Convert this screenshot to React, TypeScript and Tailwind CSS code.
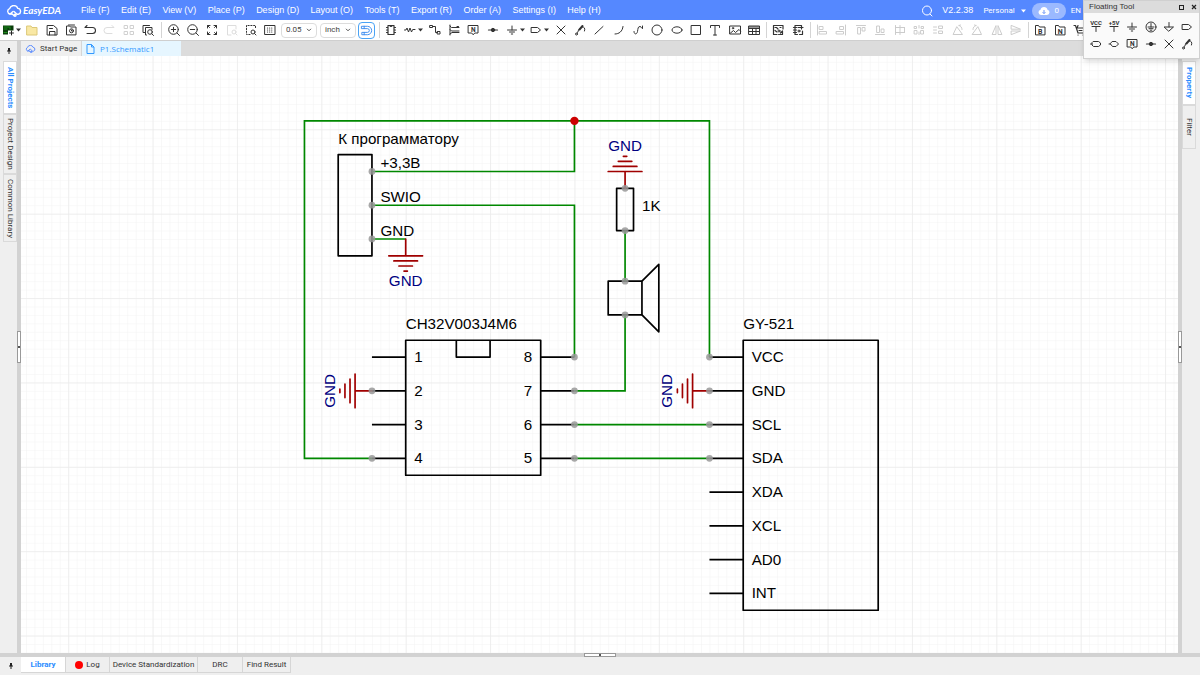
import React from 'react';

type IconProps = { children: React.ReactNode; className?: string };

const Icon = ({ children, className = 'size-4' }: IconProps) => (
  <svg
    viewBox="0 0 16 16"
    className={`${className} shrink-0`}
    fill="none"
    stroke="currentColor"
    strokeWidth="1"
    strokeLinecap="round"
    strokeLinejoin="round"
    aria-hidden="true"
  >
    {children}
  </svg>
);

const Caret = () => (
  <svg viewBox="0 0 5 4" className="w-[5px] h-1 shrink-0" fill="currentColor" aria-hidden="true">
    <path d="M0 .6h5L2.5 3.4z" />
  </svg>
);

const CloudLogo = ({ className }: { className: string }) => (
  <svg
    viewBox="0 0 16 12"
    className={`${className} shrink-0`}
    fill="none"
    stroke="currentColor"
    strokeWidth="1.4"
    strokeLinecap="round"
    strokeLinejoin="round"
    aria-hidden="true"
  >
    <path d="M6 9H4A2.800 2.800 0 0 1 3.600 3.600 4.400 4.400 0 0 1 11.900 3.400 3 3 0 0 1 12.600 9.200H11L8 6.500" />
    <path d="M4 9 7 6.500M6 9 8 10.500" />
    <circle cx="9" cy="10.300" r="1" />
  </svg>
);

const smallText = (x: number, y: number, size: number, text: string) => (
  <text x={x} y={y} fontSize={size} fontWeight="bold" fill="currentColor" stroke="none" textAnchor="middle">
    {text}
  </text>
);

const icons: Record<string, React.ReactNode> = {
  New: (
    <>
      <rect x="3" y="3.5" width="10.5" height="9" fill="#0b3d0b" stroke="none" />
      <path d="M4 5h5M4 7h3M4 10.5h3M10 5v2" stroke="#1d8f1d" />
      <path d="M8 8.500h6V13H8z" fill="#fff" stroke="none" />
      <path d="M11.500 9v4M9.500 11h4" stroke="#222" />
    </>
  ),
  Open: <path d="M3 4h4l1 1.500h5v7.500H3z" fill="#f9e8a4" stroke="#dcc878" />,
  Save: <path d="M3.500 3.500h6l3.500 3v6.500h-9.500zM5.500 13V9.500h5.500V13M5.500 6.500h3" />,
  Preview: (
    <>
      <path d="M3.500 12.500V4h3l1 1H13v7.500z M5.500 3h6" />
      <circle cx="8.500" cy="8.800" r="2" />
      <path d="M8.500 8v1h1" />
    </>
  ),
  Undo: <path d="M5 3.500 3 5.500h7.500a3 3 0 0 1 0 6H5" strokeWidth="1.100" />,
  Redo: <path d="M11 3.500 13 5.500H6a3 3 0 0 0 0 6h5" stroke="#dddddd" />,
  Tiles: (
    <path d="M3.500 3.500H6.500V6.500H3.500zM9.500 3.500h3v3h-3zM3.500 9.500h3v3h-3zM9.500 9.500h3v3h-3z" stroke="#d0d0d0" />
  ),
  Find: (
    <>
      <path d="M5 10.500H3v-7h6.500M6.500 13H5.500V5.500H12V7.500" />
      <circle cx="10" cy="10" r="2.300" />
      <path d="m11.800 11.800 1.700 1.700" />
    </>
  ),
  'Zoom in': (
    <>
      <circle cx="7.500" cy="7.500" r="4.800" />
      <path d="m11 11 2.500 2.500M5.300 7.500h4.400M7.500 5.300v4.400" />
    </>
  ),
  'Zoom out': (
    <>
      <circle cx="7.500" cy="7.500" r="4.800" />
      <path d="m11 11 2.500 2.500M5.300 7.500h4.400" />
    </>
  ),
  Fit: <path d="M3.500 6V3.500H6M10 3.500h2.500V6M12.500 10v2.500H10M6 12.500H3.500V10M3.500 3.500l2 2M12.500 3.500l-2 2M12.500 12.500l-2-2M3.500 12.500l2-2" />,
  'Zoom selection': (
    <g stroke="#dddddd">
      <path d="M7 13H3.500V3.500H12V7" />
      <circle cx="10" cy="10" r="2" />
      <path d="m11.500 11.500 1.500 1.500" />
    </g>
  ),
  'Zoom area': (
    <>
      <path d="M7 12.500H3.500v-9h9V7" strokeDasharray="1.200 1.600" />
      <circle cx="10" cy="10" r="2" />
      <path d="m11.500 11.500 1.500 1.500" />
    </>
  ),
  'Grid type': (
    <>
      <rect x="3" y="3.500" width="10" height="9" />
      <path d="M5.500 6h5.500M5.500 8h5.500M5.500 10h5.500" strokeDasharray=".1 2" strokeWidth="1.200" />
    </>
  ),
  Snap: <path d="M3 3.500H9a4.500 4.500 0 0 1 0 9H3V10H9a2 2 0 0 0 0-4H3zM5.500 3.500V6M5.500 10v2.500" />,
  Component: (
    <path d="M5 3.500h6v9H5zM7 3.500a1 1 0 0 0 2 0M3.500 5.500H5M3.500 8H5M3.500 10.500H5M11 5.500h1.500M11 8h1.500M11 10.500h1.500" strokeWidth="1.200" />
  ),
  Resistor: <path d="M2.500 8H4l1-2 1.500 4L8 6l1.500 4 1.200-2.500H13" />,
  Wire: <path d="M3 3.500h2.500v2H3zM5.500 4.500H8.500v6H10.500M10.500 9.500H13v2.500h-2.500z" />,
  Bus: <path d="M4 3v10M4 4l1.500 1.500H13M4 7.500 5.500 9H13M11 4.500h1.500M4 12l2-1.500h7" />,
  'Net label': (
    <>
      <path d="M3.500 3.500h9.500V11H9.700L8.200 12.800 6.700 11H3.500z" />
      {smallText(8.2, 9.7, 6.5, 'N')}
    </>
  ),
  Junction: (
    <>
      <path d="M3.500 8h9" strokeWidth="1.200" />
      <circle cx="8" cy="8" r="1.700" fill="currentColor" />
    </>
  ),
  Ground: <path d="M8 4v4M3.500 8h9M5.500 10h5M7.300 12h1.400" />,
  Port: <path d="M3.500 5.500h6L12.500 8l-3 2.500h-6z" />,
  'No connect': <path d="m4 4 8 8M12 4l-8 8" />,
  Probe: (
    <>
      <circle cx="4.500" cy="12" r="1" />
      <path d="M5 11c2-1 .500-3 2.500-4.500M12.500 9c1-3-.500-4-2-4" />
      <path d="M7.500 7.500 10.500 4" strokeWidth="2" />
    </>
  ),
  Line: <path d="m4 12 8-7.500" />,
  Arc: <path d="M4 12c4 0 7.500-2.500 8-7.500" />,
  Bezier: <path d="M4 9.500c0 3.500 3 3 3.500 0S8 4.500 10 4.500c1.700 0 1.300 2.500 2.500 2M12.500 4v2" />,
  Circle: <circle cx="8" cy="8" r="5" />,
  Ellipse: <ellipse cx="8" cy="8" rx="5" ry="3.200" />,
  Rectangle: <rect x="3.500" y="3.500" width="9" height="9" />,
  Text: <path d="M3.500 5.500v-2h9v2M8 3.500v9.500M6.500 13h3" />,
  Image: (
    <>
      <rect x="3" y="4" width="10.500" height="8" />
      <path d="m3.500 11 3-2.500 2 2 3.500-3 1.500 1.500" />
      <circle cx="6" cy="6.200" r=".7" />
    </>
  ),
  Table: <path d="M3 4h10.500v8.500H3zM3 6.500h10.500M3 9.500h10.500M6.500 6.500v6M10 6.500v6M3 5h10.500" />,
  'To PCB': (
    <>
      <path d="M13 7V3.500H3.500v9H7M5 5.500h1.500L8 7M5 8.500 7 10M10 5.500h1" strokeWidth="1.200" />
      <circle cx="9" cy="9" r="1" />
      <path d="M12.500 9v3.500H9.500M8.500 12.500v0M12.500 9l-2 2" strokeWidth="1.200" />
    </>
  ),
  'Update PCB': (
    <>
      <path d="M5 3.500h6.500v3.500M5 3.500v9h2.500M3.500 5.500h3M3.500 8h3M3.500 10.500h3M8 5.500h5" strokeWidth="1.200" />
      <circle cx="9" cy="9" r="1" />
      <path d="M12.500 9v3.500H9.500" strokeWidth="1.200" />
    </>
  ),
  'Align left': <path d="M3.500 3v10M5.500 4.500H9v3H5.500zM5.500 9.500h7v2.500h-7z" />,
  'Align right': <path d="M12.500 3v10M7 4.500h3.500v3H7zM3.500 9.500h7v2.500h-7z" />,
  'Align top': <path d="M3.500 3.500h9M5 5.500h2.500V12H5zM9.500 5.500H12V9H9.500z" />,
  'Align bottom': <path d="M3.500 12.500h9M5 4h2.500v6.500H5zM9.500 7H12v3.500H9.500z" />,
  'Align grid': <path d="M3.500 3.500v9M8 3.500v9M12.500 5.500h-9M12.500 10.500h-9M12.500 5.500v5" />,
  'Distribute horizontally': <path d="M8 3.500v2.500M8 10v2.500M3.500 4.500h2v2h-2zM10.500 4.500h2v2h-2zM3.500 8.500H6v3.500H3.500zM10 8.500h2.500v3.500H10z" />,
  'Distribute vertically': <path d="M3.500 5h3M3.500 8h3M3.500 11h3M9 4h3.500v2.500H9zM9 9h3.500v2.500H9z" />,
  'Rotate left': <path d="M3.500 12.500h9L7 5zM9 3.500c2 .5 3 2 3 4M9 3.500 10.500 3" />,
  'Rotate right': <path d="M3.500 12.500h9L9 5zM7 3.500c-2 .5-3 2-3 4M7 3.500 5.500 3" />,
  'Flip horizontal': <path d="M7 4v8.500H3.500zM9 4v8.500h3.500z" />,
  'Flip vertical': <path d="M3.500 7.200 12.500 7.200 3.500 3.500zM3.500 9h9L3.500 12.500z" />,
  'Export BOM': (
    <>
      <path d="M3.500 12.500v-9h3l1 1.500H13v7.500z" />
      {smallText(8.2, 11.6, 7, 'B')}
    </>
  ),
  'Export netlist': (
    <>
      <path d="M3.500 12.500v-9h3l1 1.500H13v7.500z" />
      {smallText(8.2, 11.6, 7, 'N')}
    </>
  ),
  Cart: <path d="M3 3.500h1.500l2.500 7.500h6M5.500 6h7.500M7 13h.1M12 13h.1M8 8.500h3M7 3.500 6 6" strokeWidth="1.200" />,
  VCC: (
    <>
      {smallText(8, 6, 6, 'VCC')}
      <path d="M4 7.500h8M8 7.500v5" />
    </>
  ),
  '+5V': (
    <>
      {smallText(8, 6, 6, '+5V')}
      <path d="M4 7.500h8M8 7.500v5" />
    </>
  ),
  'Protective ground': (
    <>
      <circle cx="8" cy="8" r="5" />
      <path d="M8 4.500v3.500M5 8h6M6 9.700h4M7.200 11.200h1.600" />
    </>
  ),
  'Analog ground': <path d="M8 3.500V8M3.500 8h9L8 12z" />,
  'Input port': <path d="M5.500 5.500h5l2 1.500v2l-2 1.500h-5l-1.500-1.500V7zM2.500 8H4" />,
  'Bidirectional port': <path d="M6.500 5.500h3.500L12.500 8 10 10.500H6.500L4.500 8zM3 8h1.500" />,
};

type Tool = { name: string; menu?: boolean };

const list = (...names: string[]): Tool[] =>
  names.map((n) => (n.endsWith('*') ? { name: n.slice(0, -1), menu: true } : { name: n }));

const fileTools = list('New*', 'Open', 'Save', 'Preview', 'Undo', 'Redo', 'Tiles', 'Find');
const viewTools = list('Zoom in', 'Zoom out', 'Fit', 'Zoom selection', 'Zoom area', 'Grid type');
const drawTools = list(
  'Component', 'Resistor*', 'Wire', 'Bus', 'Net label', 'Junction', 'Ground*', 'Port*', 'No connect', 'Probe',
  'Line', 'Arc', 'Bezier', 'Circle', 'Ellipse', 'Rectangle', 'Text', 'Image', 'Table'
);
const pcbTools = list('To PCB', 'Update PCB');
const alignTools = list(
  'Align left', 'Align right', 'Align top', 'Align bottom', 'Align grid', 'Distribute horizontally',
  'Distribute vertically', 'Rotate left', 'Rotate right', 'Flip horizontal', 'Flip vertical'
);
const exportTools = list('Export BOM', 'Export netlist', 'Cart');
const floatingTools = list(
  'VCC', '+5V', 'Ground', 'Protective ground', 'Analog ground', 'Port',
  'Input port', 'Bidirectional port', 'Net label', 'Junction', 'No connect', 'Probe'
);

const ToolGroup = ({ tools, className }: { tools: Tool[]; className: string }) => (
  <div className={`flex shrink-0 items-center justify-between ${className}`}>
    {tools.map((t) => (
      <button key={t.name} type="button" aria-label={t.name} className="flex shrink-0 items-center">
        <Icon>{icons[t.name]}</Icon>
        {t.menu && <Caret />}
      </button>
    ))}
  </div>
);

const Separator = () => <div className="h-4 w-px shrink-0 bg-[#d4d4d4]" />;

const Select = ({ label, value, className }: { label: string; value: string; className: string }) => (
  <div className={`relative flex h-[15px] shrink-0 items-center rounded-sm border border-[#dcdcdc] ${className}`}>
    <select aria-label={label} className="w-full appearance-none bg-transparent pl-1 text-[8px] leading-3 text-[#444]">
      <option>{value}</option>
    </select>
    <svg viewBox="0 0 6 4" className="pointer-events-none absolute right-1 h-1 w-1.5" fill="none" stroke="#555" aria-hidden="true">
      <path d="m1 .8 2 2 2-2" />
    </svg>
  </div>
);

const menu = [
  'File (F)', 'Edit (E)', 'View (V)', 'Place (P)', 'Design (D)', 'Layout (O)',
  'Tools (T)', 'Export (R)', 'Order (A)', 'Settings (I)', 'Help (H)',
];

const Header = () => (
  <header className="flex h-5 shrink-0 items-center bg-[#5588ff] pt-px pl-1.5 text-[9px] text-white">
    <a href="#" className="flex w-[75px] shrink-0 items-center gap-px">
      <CloudLogo className="h-3 w-4" />
      <span className="font-[Lato,sans-serif] text-[10px] font-bold italic">EasyEDA</span>
    </a>
    <nav className="flex w-[520px] shrink-0 justify-between font-['Liberation_Sans',Arial,sans-serif]">
      {menu.map((m) => (
        <a key={m} href="#" className="whitespace-nowrap">
          {m}
        </a>
      ))}
    </nav>
    <div className="ml-auto flex shrink-0 items-center pr-[119px]">
      <button type="button" aria-label="Search" className="mr-[7px]">
        <Icon>
          <circle cx="8" cy="7.500" r="4.500" />
          <path d="m11 11 2 2" />
        </Icon>
      </button>
      <span className="font-['Liberation_Sans',Arial,sans-serif]">V2.2.38</span>
      <button type="button" className="ml-2.5 flex items-center gap-1.5 text-[8px]">
        Personal <Caret />
      </button>
      <button type="button" className="mr-[5px] ml-1.5 flex h-4 w-[34px] items-center justify-center gap-1 rounded-full bg-[#9bb9ff] text-[8px]">
        <svg viewBox="0 0 12 10" className="h-2.5 w-3" aria-hidden="true">
          <path d="M3 9A2.700 2.700 0 0 1 2.500 3.700 3.600 3.600 0 0 1 9.500 3.700 2.700 2.700 0 0 1 9 9z" fill="#fff" />
          <path d="M6 4v3.500M4.600 6.200 6 7.600l1.400-1.400" fill="none" stroke="#6f97f5" />
        </svg>
        0
      </button>
      <span className="text-[8px]">EN</span>
    </div>
  </header>
);

const Toolbar = () => (
  <div className="flex h-[21px] shrink-0 items-center overflow-hidden border-b border-[#cfcfcf] bg-white text-[#333]">
    <ToolGroup tools={fileTools} className="w-[156px]" />
    <div className="flex w-2.5 shrink-0 justify-center">
      <Separator />
    </div>
    <ToolGroup tools={viewTools} className="w-28" />
    <Select label="Grid size" value="0.05" className="ml-[3px] w-9" />
    <Select label="Unit" value="inch" className="ml-[3px] w-9" />
    <button
      type="button"
      aria-label="Snap"
      className="ml-[2px] flex size-[17px] shrink-0 items-center justify-center rounded-sm border border-[#4aa3f5] text-[#3b8cf0]"
    >
      <Icon className="size-[15px]">{icons.Snap}</Icon>
    </button>
    <div className="flex w-2 shrink-0 justify-center">
      <Separator />
    </div>
    <ToolGroup tools={drawTools} className="w-[379px]" />
    <div className="flex w-2 shrink-0 justify-center">
      <Separator />
    </div>
    <ToolGroup tools={pcbTools} className="w-9" />
    <div className="flex w-2 shrink-0 justify-center">
      <Separator />
    </div>
    <ToolGroup tools={alignTools} className="w-[210px] text-[#cccccc]" />
    <div className="flex w-2 shrink-0 justify-center">
      <Separator />
    </div>
    <ToolGroup tools={exportTools} className="w-[55px]" />
  </div>
);

const FloatingTool = () => (
  <section className="absolute top-0 right-0 w-[117px] border border-[#d0d0d0] bg-[#fafafa] text-[#333] shadow-md">
    <div className="flex h-3 items-center bg-[#dcdcdc] pr-0.5 pl-[5px]">
      <h2 className="flex-1 font-['Liberation_Sans',Arial,sans-serif] text-[8px] leading-3">Floating Tool</h2>
      <button type="button" aria-label="Collapse" className="mr-[7px] size-[5px] border border-[#222]" />
      <button type="button" aria-label="Close">
        <svg viewBox="0 0 6 6" className="size-1.5" stroke="#222" strokeWidth="1.200" aria-hidden="true">
          <path d="m1 1 4 4M5 1 1 5" />
        </svg>
      </button>
    </div>
    <div className="grid grid-cols-6 gap-y-px px-[3px] pt-1.5 pb-1.5">
      {floatingTools.map((t) => (
        <button key={t.name} type="button" aria-label={t.name} className="flex justify-center">
          <Icon>{icons[t.name]}</Icon>
        </button>
      ))}
    </div>
  </section>
);

const Pin = () => (
  <svg viewBox="0 0 4 6" className="h-1.5 w-1" fill="#222" aria-hidden="true">
    <path d="M1 0h2v2.500h1v1H2.500V6h-1V3.500H0v-1h1z" />
  </svg>
);

const sideTab = 'flex w-3.5 items-center justify-center border border-[#dadada] text-[8px] [writing-mode:vertical-rl]';
const splitter = 'bg-[#d2d2d2] bg-[radial-gradient(#bdbdbd_40%,transparent_50%)] bg-[length:2px_2px]';

const Handle = ({ vertical }: { vertical?: boolean }) => (
  <div
    className={`flex items-center justify-center border border-[#999] bg-white ${vertical ? 'h-8 w-1' : 'h-1 w-8'}`}
  >
    <div className="size-0.5 bg-[#555]" />
  </div>
);

// wires in schematic units, ten units to a grid step
const wires = [
  'M360 390H280V-10H760V270',
  'M600-10V50H360',
  'M360 90H600V270',
  'M360 130H400',
  'M660 120V180',
  'M660 220V310H600',
  'M600 350H760',
  'M600 390H760',
];

const dots = [
  [360, 50], [360, 90], [360, 130], [360, 310], [360, 390],
  [600, 270], [600, 310], [600, 350], [600, 390],
  [760, 270], [760, 310], [760, 350], [760, 390],
  [660, 70], [660, 120], [660, 180], [660, 220],
];

const modulePins = ['VCC', 'GND', 'SCL', 'SDA', 'XDA', 'XCL', 'AD0', 'INT'];

const GroundSymbol = ({ x, y, angle = 0 }: { x: number; y: number; angle?: number }) => (
  <path
    transform={`translate(${x} ${y}) rotate(${angle})`}
    d="M0 0V20M-20 20H20M-14 26H14M-8 32H8M-2 38H2"
    stroke="#a00000"
    strokeWidth="2"
    fill="none"
    strokeLinecap="round"
  />
);

const Schematic = () => (
  <svg
    className="block size-full font-['Liberation_Sans',Arial,sans-serif]"
    fontSize="18"
    role="img"
    aria-label="Schematic"
  >
    <defs>
      <pattern id="minor" width="10" height="10" patternUnits="userSpaceOnUse" patternTransform="translate(47.2 73.3) scale(.84375)">
        <path d="M0 0H10M0 0V10" stroke="#f3f3f3" strokeWidth="1.200" fill="none" />
      </pattern>
      <pattern id="major" width="100" height="100" patternUnits="userSpaceOnUse" patternTransform="translate(47.2 73.3) scale(.84375)">
        <path d="M0 0H100M0 0V100" stroke="#ebebeb" strokeWidth="1.600" fill="none" />
      </pattern>
    </defs>
    <rect width="100%" height="100%" fill="#ffffff" />
    <rect width="100%" height="100%" fill="url(#minor)" />
    <rect width="100%" height="100%" fill="url(#major)" />
    <g transform="translate(47.2 73.3) scale(.84375)">
      <g fill="none" stroke="#000000" strokeWidth="2" strokeLinejoin="round">
        <rect x="320" y="30" width="40" height="120" />
        <rect x="400" y="250" width="160" height="160" />
        <path d="M460 250v20h40v-20" />
        <rect x="650" y="70" width="20" height="50" />
        <rect x="640" y="180" width="40" height="40" />
        <path d="M680 180l20-20v80l-20-20" />
        <rect x="800" y="250" width="160" height="320" />
        {[270, 310, 350, 390].map((y) => (
          <path key={y} d={`M360 ${y}H400M560 ${y}H600`} />
        ))}
        {modulePins.map((p, i) => (
          <path key={p} d={`M760 ${270 + i * 40}H800`} />
        ))}
      </g>
      <g fill="none" stroke="#008800" strokeWidth="2">
        {wires.map((d) => (
          <path key={d} d={d} />
        ))}
      </g>
      <GroundSymbol x={400} y={130} />
      <GroundSymbol x={360} y={310} angle={90} />
      <GroundSymbol x={760} y={310} angle={90} />
      <GroundSymbol x={660} y={70} angle={180} />
      <g fill="#999999" fillOpacity=".85">
        {dots.map(([x, y]) => (
          <circle key={`${x}-${y}`} cx={x} cy={y} r="4" />
        ))}
      </g>
      <circle cx="600" cy="-10" r="5" fill="#cc0000" />
      <g fill="#000000">
        <text x="320" y="17">К программатору</text>
        <text x="370" y="46">+3,3В</text>
        <text x="370" y="86">SWIO</text>
        <text x="370" y="126">GND</text>
        <text x="400" y="237">CH32V003J4M6</text>
        <text x="680" y="97">1K</text>
        <text x="800" y="237">GY-521</text>
        {[1, 2, 3, 4].map((n, i) => (
          <text key={n} x="410" y={276 + i * 40}>{n}</text>
        ))}
        {[8, 7, 6, 5].map((n, i) => (
          <text key={n} x="550" y={276 + i * 40} textAnchor="end">{n}</text>
        ))}
        {modulePins.map((p, i) => (
          <text key={p} x="810" y={276 + i * 40}>{p}</text>
        ))}
      </g>
      <g fill="#000080" textAnchor="middle">
        <text x="400" y="186">GND</text>
        <text x="660" y="26">GND</text>
        <text transform="translate(316 310) rotate(-90)">GND</text>
        <text transform="translate(716 310) rotate(-90)">GND</text>
      </g>
    </g>
  </svg>
);

const bottomTab = 'flex h-4 items-center border-r border-b border-[#d6d6d6] text-[8px]';

export default function App() {
  return (
    <div className="relative flex h-screen flex-col overflow-hidden bg-[#efefef] font-[Roboto,Arial,sans-serif] text-[#333]">
      <Header />
      <Toolbar />

      <div className="flex min-h-0 flex-1">
        {/* Left panel tabs */}
        <aside className="flex w-[17px] shrink-0 flex-col items-end bg-[#efefef]">
          <div className="flex h-5 w-full items-center justify-center">
            <Pin />
          </div>
          <button type="button" className={`${sideTab} h-[53px] bg-white font-bold text-[#2b8cff]`}>
            All Projects
          </button>
          <button type="button" className={`${sideTab} h-[60px]`}>Project Design</button>
          <button type="button" className={`${sideTab} h-[68px]`}>Common Library</button>
        </aside>
        <div className={`flex w-1 shrink-0 items-center ${splitter}`}>
          <Handle vertical />
        </div>

        <main className="flex min-w-0 flex-1 flex-col">
          <div className="flex h-[15px] shrink-0 bg-[#dcdcdc] text-[8px]">
            <button type="button" className="flex w-[60px] items-center gap-1 bg-[#efefef] pl-1">
              <CloudLogo className="h-2 w-[11px] text-[#5588ff]" />
              <span className="whitespace-nowrap">Start Page</span>
            </button>
            <button
              type="button"
              className="flex w-[100px] items-center gap-[5px] border-l border-[#d6d6d6] bg-[#e6f6ff] pl-1 font-['Open_Sans',sans-serif] text-[#3399ff]"
            >
              <svg viewBox="0 0 9 10" className="h-2.5 w-[9px]" fill="none" stroke="currentColor" aria-hidden="true">
                <path d="M1 .5h4.500l2.500 2.500v6.500H1zM5.500.5V3H8" />
              </svg>
              P1.Schematic1
            </button>
          </div>
          <div className="min-h-0 flex-1 overflow-hidden">
            <Schematic />
          </div>
        </main>

        {/* Right panel tabs */}
        <div className={`flex w-1 shrink-0 items-center ${splitter}`}>
          <Handle vertical />
        </div>
        <aside className="flex w-[18px] shrink-0 flex-col items-start bg-[#efefef] pt-5">
          <button type="button" className={`${sideTab} h-11 bg-white font-bold text-[#2b8cff]`}>Property</button>
          <button type="button" className={`${sideTab} h-11`}>Filter</button>
        </aside>
      </div>

      <div className={`flex h-1 shrink-0 justify-center ${splitter}`}>
        <Handle />
      </div>
      <footer className="flex h-[18px] shrink-0 bg-[#efefef]">
        <div className="flex w-[21px] items-center justify-center">
          <Pin />
        </div>
        <button type="button" className={`${bottomTab} w-[45px] justify-center bg-white font-bold text-[#2b8cff]`}>
          Library
        </button>
        <button type="button" className={`${bottomTab} w-11 justify-center gap-[3px]`}>
          <span className="size-2 rounded-full bg-[#ff0000]" />
          Log
        </button>
        <button type="button" className={`${bottomTab} w-[88px] justify-center whitespace-nowrap`}>Device Standardization</button>
        <button type="button" className={`${bottomTab} w-[45px] justify-center`}>DRC</button>
        <button type="button" className={`${bottomTab} w-12 justify-center whitespace-nowrap`}>Find Result</button>
      </footer>

      <FloatingTool />
    </div>
  );
}
